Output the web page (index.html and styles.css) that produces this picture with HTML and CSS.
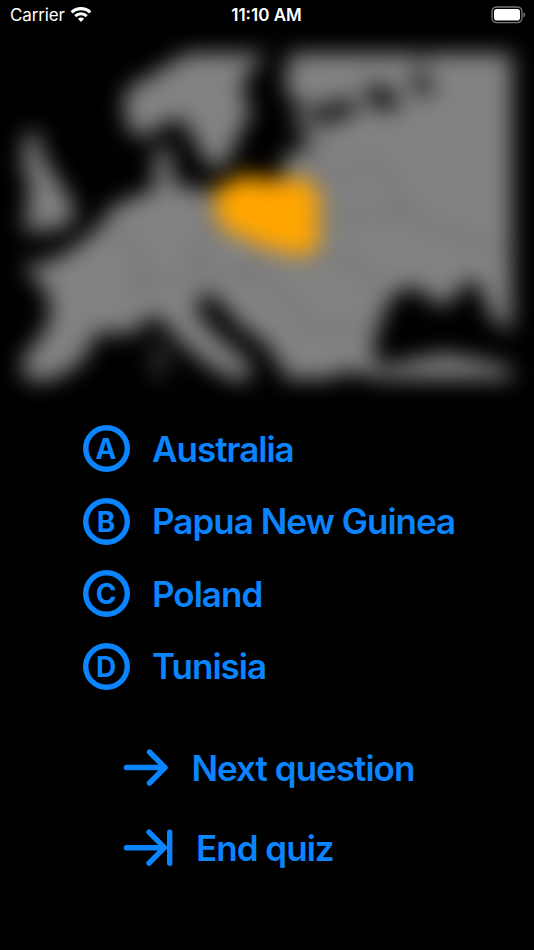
FILE: index.html
```
<!DOCTYPE html>
<html lang="en">
<head>
    <meta charset="UTF-8">
    <meta name="viewport" content="width=device-width, initial-scale=1.0">
    <title>Country quiz</title>
    <link rel="stylesheet" href="styles.css">
</head>
<body>
    <header class="status-bar">
        <div class="carrier">
            <span class="carrier-name">Carrier</span>
            <svg class="wifi" viewBox="0 0 22 17">
                <path d="M1.7 6.3C7 1.3 15 1.3 20.3 6.3" stroke-width="3.2"/>
                <path d="M5.2 10.1C8.5 7 13.5 7 16.8 10.1" stroke-width="2.9"/>
                <path class="wifi-dot" d="M7.9 12.7C9.7 11.1 12.3 11.1 14.1 12.7L11 16Z"/>
            </svg>
        </div>
        <div class="time">11:10 AM</div>
        <div class="power">
            <svg class="battery" viewBox="0 0 35 18">
                <rect class="battery-case" x="1" y="1" width="30" height="15.6" rx="4.5"/>
                <rect class="battery-level" x="3" y="3" width="26" height="11.6" rx="2.8"/>
                <path class="battery-tip" d="M32.5 6.2C34.7 6.7 34.7 10.9 32.5 11.4Z"/>
            </svg>
        </div>
    </header>

    <main>
        <svg class="map" viewBox="0 30 534 370">
            <g class="land">
                <!-- British Isles -->
                <path d="M25 134L38 132L42 154L54 174L70 198L76 216L64 228L25 233L27 208L30 188L23 166Z"/>
                <!-- Scandinavia -->
                <path d="M187 53H266L244 79L243 96L252 112L239 134L230 159L216 170L204 160L193 137L182 119L168 122L143 138L130 132L123 108L127 89L155 73Z"/>
                <!-- mainland -->
                <path d="M290 53H512V331L500 325L489 313L482 293L475 280L465 283L450 303L437 306L424 292L408 287L392 296L380 323L372 353L382 367L414 359L444 353L476 359L512 368V379H382L348 371L328 379H286L278 361L263 341L240 326L223 305L207 292L195 303L204 322L225 342L250 363L251 377L237 382L207 365L180 342L163 321L151 315L137 331L121 335L102 331L92 340L86 357L65 374L45 382L23 378V358L40 337L50 320L50 300L39 282L22 267L53 260L75 247L96 230L113 206L144 193L156 187L153 160L158 150L171 145V162L176 185L213 192L285 184L282 158L313 142L292 121L308 105L292 102L284 84Z"/>
            </g>
            <g class="lakes">
                <path d="M312 108L352 98L359 112L330 123L308 124Z"/>
                <path d="M367 83L383 86L401 99L395 111L369 107Z"/>
                <path d="M409 71L427 76L435 93L419 96Z"/>
                <path d="M411 45H435L423 64Z"/>
            </g>
            <path class="islands" d="M150 342L167 340L169 372L151 382Z"/>
            <g class="borders">
                <path d="M112 228L137 250L144 276L132 300"/>
                <path d="M137 278L171 284L205 269L238 274L259 257"/>
                <path d="M210 190L215 233L191 251L205 269"/>
                <path d="M315 187L346 176L370 160L396 187L404 212L440 230L482 243L514 257"/>
                <path d="M318 219L361 213L404 212"/>
                <path d="M314 252L356 262L378 293"/>
                <path d="M318 187L305 160L336 144"/>
                <path d="M238 274L277 284L309 329L365 326"/>
            </g>
            <path class="country" d="M215 191L228 184L247 175L259 180L308 180L317 191L319 210L316 225L320 239L310 254L290 253L276 248L263 246L246 237L223 228L217 211Z"/>
        </svg>

        <div class="answers">
            <button class="answer"><span class="letter">A</span><span>Australia</span></button>
            <button class="answer"><span class="letter">B</span><span>Papua New Guinea</span></button>
            <button class="answer"><span class="letter">C</span><span>Poland</span></button>
            <button class="answer"><span class="letter">D</span><span>Tunisia</span></button>
        </div>

        <div class="actions">
            <button class="action next">
                <svg class="arrow" viewBox="0 0 50 38"><path d="M3.5 19.5H41M26.5 4L42 19.5L26.5 35"/></svg>
                <span>Next question</span>
            </button>
            <button class="action end">
                <svg class="arrow" viewBox="0 0 50 38"><path d="M3.5 19.7H41M26 4.2L41.5 19.7L26 35.2M46.7 4.2V35.2"/></svg>
                <span>End quiz</span>
            </button>
        </div>
    </main>
</body>
</html>
```
FILE: styles.css
```
* {
    box-sizing: border-box;
}
body {
    margin: 0;
    min-height: 950px;
    background: #000;
    color: #fff;
    font-family: Inter, "Liberation Sans", sans-serif;
}

/* status bar */
.status-bar {
    display: grid;
    grid-template-columns: 1fr auto 1fr;
    align-items: center;
    height: 30px;
    padding: 0 8px 0 10px;
}
.carrier {
    display: flex;
    align-items: center;
    gap: 5.5px;
    font-size: 17px;
    letter-spacing: -0.15px;
}
.wifi {
    width: 22px;
    height: 17px;
    margin-top: -1px;
    fill: none;
    stroke: #fff;
}
.wifi .wifi-dot {
    fill: #fff;
    stroke: none;
}
.time {
    padding-right: 3px;
    font-size: 17px;
    font-weight: 600;
}
.power {
    display: flex;
    justify-content: flex-end;
}
.battery {
    width: 35px;
    height: 18px;
    margin-top: -1px;
}
.battery-case {
    fill: none;
    stroke: #777;
    stroke-width: 1.4;
}
.battery-level {
    fill: #fff;
}
.battery-tip {
    fill: #777;
}

/* map */
.map {
    display: block;
    width: 534px;
    height: 370px;
    overflow: visible;
    filter: blur(11px);
}
.land {
    fill: #828282;
}
.lakes {
    fill: #111;
}
.islands {
    fill: #2c2c2c;
}
.borders {
    fill: none;
    stroke: #606060;
    stroke-width: 3;
}
.country {
    fill: orange;
    stroke: orange;
    stroke-width: 2;
}

/* buttons */
button {
    display: flex;
    align-items: center;
    padding: 0;
    border: none;
    background: none;
    color: #0a84ff;
    font-family: inherit;
    font-size: 35px;
    font-weight: 600;
    letter-spacing: -0.98px;
    line-height: 46px;
    white-space: nowrap;
    cursor: pointer;
}
.answers {
    display: flex;
    flex-direction: column;
    gap: 25.6px;
    padding: 25px 0 0 82.5px;
}
.answer {
    gap: 22.5px;
    height: 47px;
}
.letter {
    width: 47px;
    height: 47px;
    border-radius: 50%;
    box-shadow: inset 0 0 0 5.4px #0a84ff;
    font-size: 28px;
    font-weight: 700;
    letter-spacing: 0;
    line-height: 48px;
    text-align: center;
}
.actions {
    display: flex;
    flex-direction: column;
    gap: 32.5px;
    padding: 54px 0 0 123px;
}
.action {
    height: 48px;
}
.arrow {
    width: 50px;
    height: 38px;
    margin-top: -2px;
    fill: none;
    stroke: #0a84ff;
    stroke-width: 5.4;
    stroke-linecap: round;
    stroke-linejoin: round;
}
.next {
    gap: 18.5px;
}
.end {
    gap: 23px;
}
```
